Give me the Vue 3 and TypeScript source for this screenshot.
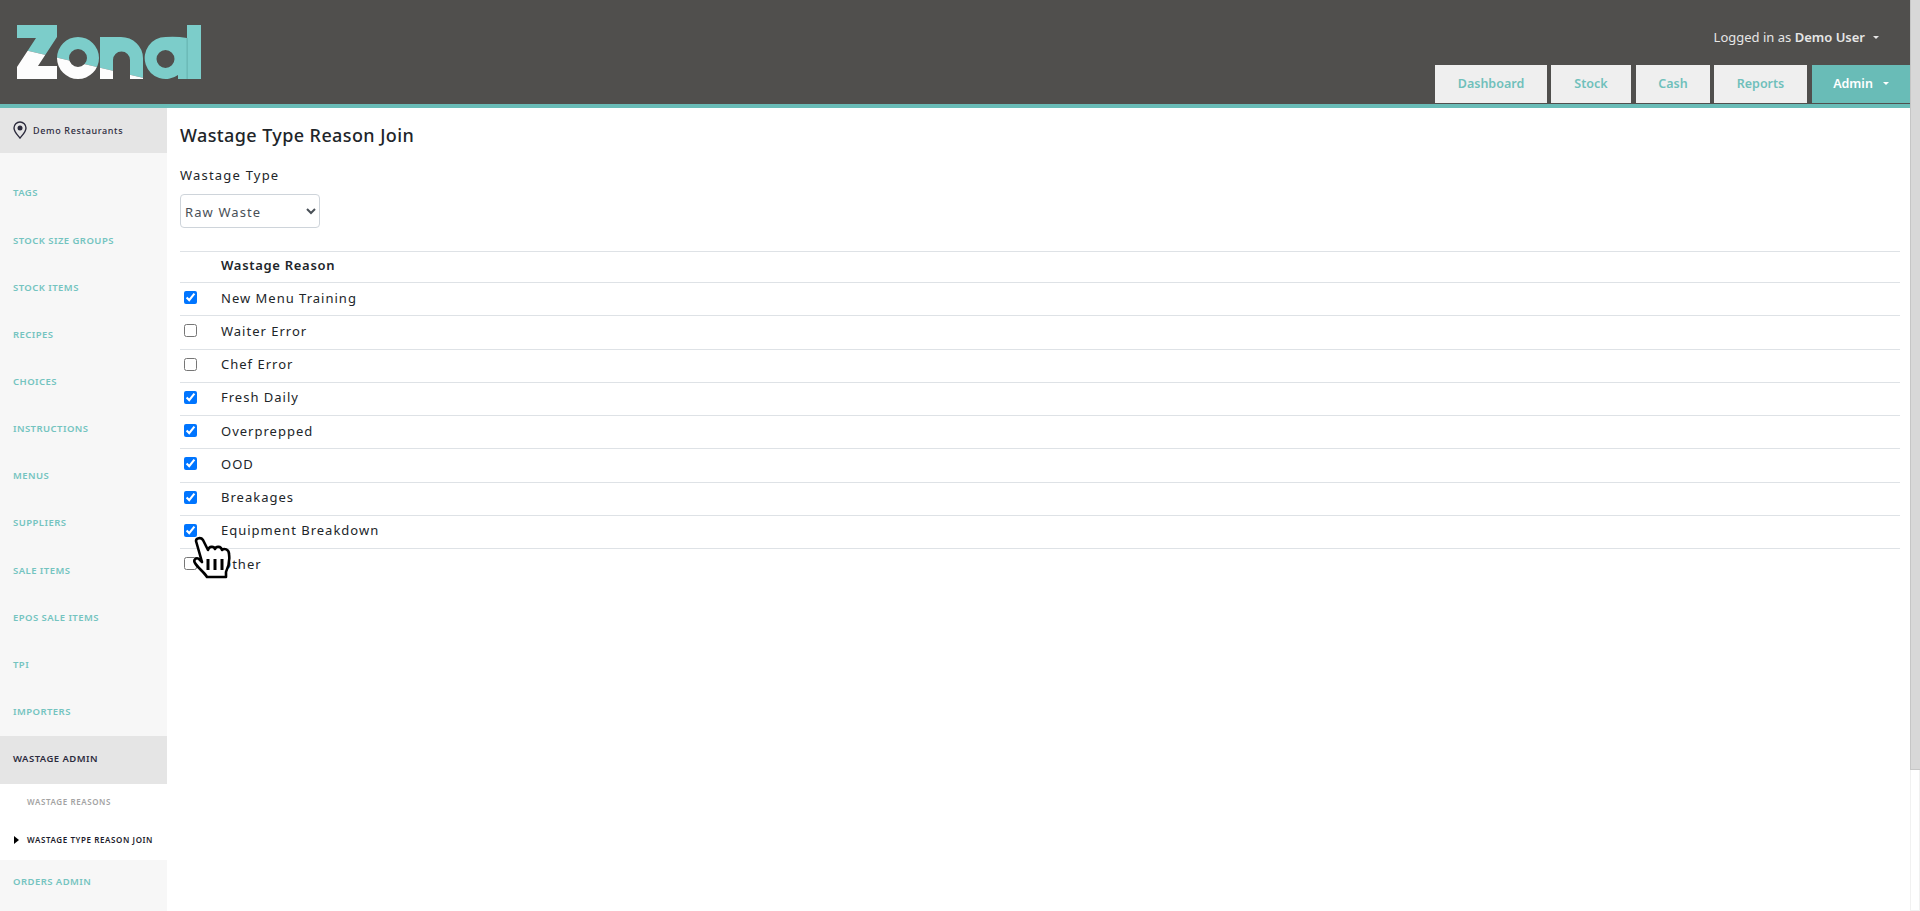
<script setup lang="ts">
interface NavItem {
  label: string
  active?: boolean
}

const topTabs = ['Dashboard', 'Stock', 'Cash', 'Reports']

const navBefore: NavItem[] = [
  { label: 'TAGS' },
  { label: 'STOCK SIZE GROUPS' },
  { label: 'STOCK ITEMS' },
  { label: 'RECIPES' },
  { label: 'CHOICES' },
  { label: 'INSTRUCTIONS' },
  { label: 'MENUS' },
  { label: 'SUPPLIERS' },
  { label: 'SALE ITEMS' },
  { label: 'EPOS SALE ITEMS' },
  { label: 'TPI' },
  { label: 'IMPORTERS' },
]

const reasons = [
  { name: 'New Menu Training', checked: true },
  { name: 'Waiter Error', checked: false },
  { name: 'Chef Error', checked: false },
  { name: 'Fresh Daily', checked: true },
  { name: 'Overprepped', checked: true },
  { name: 'OOD', checked: true },
  { name: 'Breakages', checked: true },
  { name: 'Equipment Breakdown', checked: true },
  { name: 'Other', checked: false },
]
</script>

<template>
  <div class="page">
    <div class="shell">
      <header class="topbar">
        <svg class="logo" width="190" height="56" viewBox="16 24 190 56" aria-label="Zonal">
          <defs>
            <clipPath id="logo-low"><polygon points="0,44.2 210,93.6 210,100 0,100" /></clipPath>
            <clipPath id="logo-high"><polygon points="0,0 210,0 210,93.6 0,44.2" /></clipPath>
            <g id="logo-mark">
              <polygon points="17,25 57,25 57,37 38,66 57,66 57,79 17,79 17,67 36,38 17,38" />
              <path fill-rule="evenodd" d="M78 37a21 21 0 1 0 0 42a21 21 0 1 0 0-42zM78 49a9 9 0 1 1 0 18a9 9 0 1 1 0-18z" />
              <path d="M100 37H121A22 21 0 0 1 143 58V79H130V60A8.500 8.500 0 0 0 113 60V79H100Z" />
              <path fill-rule="evenodd" d="M165.500 37A21 21 0 1 0 178 75V79H201V25H187V38Q176 36 165.500 37ZM165.500 50a9 9 0 1 1 0 18a9 9 0 1 1 0-18z" />
            </g>
          </defs>
          <use href="#logo-mark" fill="#7ccdca" clip-path="url(#logo-high)" />
          <use href="#logo-mark" fill="#fdfdfd" clip-path="url(#logo-low)" />
          <rect x="186.700" y="38" width="0.800" height="41" fill="#5fa9a6" />
        </svg>
        <div class="topbar-right">
          <div class="user">Logged in as <strong>Demo User</strong><span class="caret caret-user" /></div>
          <nav class="tabs">
            <a v-for="tab in topTabs" :key="tab" class="tab">{{ tab }}</a>
            <a class="tab tab-active">Admin<span class="caret caret-admin" /></a>
          </nav>
        </div>
      </header>

      <div class="body">
        <aside class="sidebar">
          <div class="site">
            <svg width="14" height="18" viewBox="0 0 14 18">
              <path d="M7 1a6 6 0 0 0-6 6c0 4 4 7.500 6 10 2-2.500 6-6 6-10a6 6 0 0 0-6-6z" fill="none" stroke="#2c2b3d" stroke-width="1.400" />
              <circle cx="7" cy="7" r="2.500" fill="#2c2b3d" />
            </svg>
            <span>Demo Restaurants</span>
          </div>
          <ul class="nav">
            <li v-for="item in navBefore" :key="item.label" class="nav-item">{{ item.label }}</li>
            <li class="nav-item nav-open">WASTAGE ADMIN</li>
            <li class="subnav">
              <div class="sub-item">WASTAGE REASONS</div>
              <div class="sub-item sub-current">WASTAGE TYPE REASON JOIN</div>
            </li>
            <li class="nav-item nav-last">ORDERS ADMIN</li>
          </ul>
        </aside>

        <main class="content">
          <h1>Wastage Type Reason Join</h1>
          <label class="field-label" for="wastage-type">Wastage Type</label>
          <select id="wastage-type" class="type-select">
            <option>Raw Waste</option>
          </select>
          <table class="reasons">
            <thead>
              <tr><th class="col-check" /><th>Wastage Reason</th></tr>
            </thead>
            <tbody>
              <tr v-for="r in reasons" :key="r.name">
                <td class="col-check"><input type="checkbox" :checked="r.checked"></td>
                <td>{{ r.name }}</td>
              </tr>
            </tbody>
          </table>
        </main>
      </div>
    </div>

    <div class="scrollbar"><div class="scrollbar-thumb" /></div>

    <svg class="pointer" width="40" height="44" viewBox="0 0 40 44">
      <path d="M4 5C4 2 9 1 11 4L16 14C17 10 22 10 23 13C24 10 29 10 30 14C32 12 37 13 37 18C38 25 36 32 34 36V41H15C12 36 6 32 3 27C1 24 4 21 7 23L10 26Z" fill="#fff" stroke="#000" stroke-width="2.600" stroke-linejoin="round" />
      <path d="M16 23V34M23 23V34M30 23V34" stroke="#000" stroke-width="3" fill="none" />
    </svg>
  </div>
</template>

<style scoped>
.page {
  position: relative;
  display: flex;
  height: 911px;
  overflow: hidden;
  font-family: "Noto Sans", "Open Sans", sans-serif;
  color: #212529;
}

.shell {
  flex: 1;
  min-width: 0;
  display: flex;
  flex-direction: column;
}

.scrollbar {
  width: 10px;
  flex-shrink: 0;
  box-sizing: border-box;
  background: #fff;
  border: 1px solid #f1f1f1;
  border-width: 0 1px 1px;
}

.scrollbar-thumb {
  height: 770px;
  margin: 0 -1px;
  background: #d8d8d8;
  border-left: 1px solid #c6c6c6;
  border-bottom: 1px solid #c6c6c6;
  box-sizing: border-box;
}

.topbar {
  box-sizing: border-box;
  height: 108px;
  flex-shrink: 0;
  background: #504f4d;
  border-bottom: 4px solid #69bcb7;
  display: flex;
  justify-content: space-between;
}

.logo {
  margin: 24px 0 0 16px;
}

.topbar-right {
  display: flex;
  flex-direction: column;
  align-items: flex-end;
}

.user {
  margin-top: 27px;
  height: 38px;
  padding-right: 31px;
  color: #e6e6e6;
  font-size: 13px;
  line-height: 20px;
}

.user strong {
  font-weight: 600;
}

.caret {
  display: inline-block;
  vertical-align: 3px;
  border-top: 3px solid #e6e6e6;
  border-left: 3px solid transparent;
  border-right: 3px solid transparent;
}

.caret-user {
  margin-left: 8px;
}

.caret-admin {
  margin-left: 10px;
  border-top-color: #fff;
}

.tabs {
  display: flex;
  height: 38px;
}

.tab {
  height: 38px;
  line-height: 38px;
  text-align: center;
  background: #efefef;
  color: #6fc0bb;
  font-size: 12.500px;
  font-weight: 600;
  margin-left: 4px;
}

.tab:nth-child(1) { width: 112px; }
.tab:nth-child(2) { width: 80px; }
.tab:nth-child(3) { width: 74px; margin-left: 5px; }
.tab:nth-child(4) { width: 93px; }

.tab-active {
  width: 98px;
  margin-left: 5px;
  background: #69bcb7;
  color: #fff;
}

.body {
  flex: 1;
  min-height: 0;
  display: flex;
  align-items: stretch;
}

.sidebar {
  width: 167px;
  flex-shrink: 0;
  background: #f7f7f7;
}

.site {
  height: 45px;
  padding-left: 13px;
  box-sizing: border-box;
  background: #e5e5e5;
  display: flex;
  align-items: center;
  gap: 6px;
  color: #2c2b3d;
  font-size: 9px;
  font-weight: 500;
  letter-spacing: 0.650px;
}

.site svg {
  margin-top: -2px;
}

.nav {
  list-style: none;
  margin: 0;
  padding: 16.400px 0 0;
}

.nav-item {
  height: 47.150px;
  line-height: 47.150px;
  padding-left: 13px;
  color: #74c4c0;
  font-size: 9.500px;
  font-weight: 600;
  letter-spacing: 0.450px;
}

.nav-open {
  margin-top: 0.600px;
  height: 48px;
  line-height: 46px;
  background: #e5e5e5;
  color: #2c2b3d;
}

.subnav {
  background: #fff;
  height: 76px;
}

.sub-item {
  position: relative;
  height: 38px;
  line-height: 36px;
  padding-left: 27px;
  color: #a3a3a3;
  font-size: 8px;
  font-weight: 600;
  letter-spacing: 0.600px;
}

.sub-current {
  color: #1b1b2b;
}

.sub-current::before {
  content: "";
  position: absolute;
  left: 14px;
  top: 14px;
  border-left: 5px solid #000;
  border-top: 4px solid transparent;
  border-bottom: 4px solid transparent;
}

.nav-last {
  height: 42px;
  line-height: 44px;
}

.content {
  flex: 1;
  min-width: 0;
  padding: 13px 10px 0 13px;
}

h1 {
  margin: 0;
  font-size: 18px;
  font-weight: 500;
  line-height: 28px;
  letter-spacing: 0.400px;
  color: #212529;
}

.field-label {
  display: block;
  margin-top: 16px;
  font-size: 13px;
  line-height: 20px;
  letter-spacing: 1.200px;
}

.type-select {
  display: block;
  box-sizing: border-box;
  margin-top: 9px;
  width: 140px;
  height: 34px;
  padding: 1px 0 0;
  border: 1px solid #ced4da;
  border-radius: 4px;
  background: #fff;
  color: #495057;
  font-family: inherit;
  font-size: 13px;
  letter-spacing: 1.100px;
}

.reasons {
  width: 100%;
  margin-top: 23px;
  border-collapse: collapse;
  font-size: 13px;
  letter-spacing: 1px;
}

.reasons th,
.reasons td {
  height: 33.250px;
  padding: 0 0 3px;
  border-top: 1px solid #dee2e6;
  text-align: left;
  box-sizing: border-box;
}

.reasons th {
  height: 31px;
  padding-bottom: 4px;
  font-weight: 600;
  letter-spacing: 0.700px;
}

.col-check {
  width: 41px;
  padding-left: 4px !important;
  box-sizing: border-box;
}

.col-check input {
  display: block;
  margin: 0;
}

.pointer {
  position: absolute;
  left: 192px;
  top: 536px;
}
</style>
